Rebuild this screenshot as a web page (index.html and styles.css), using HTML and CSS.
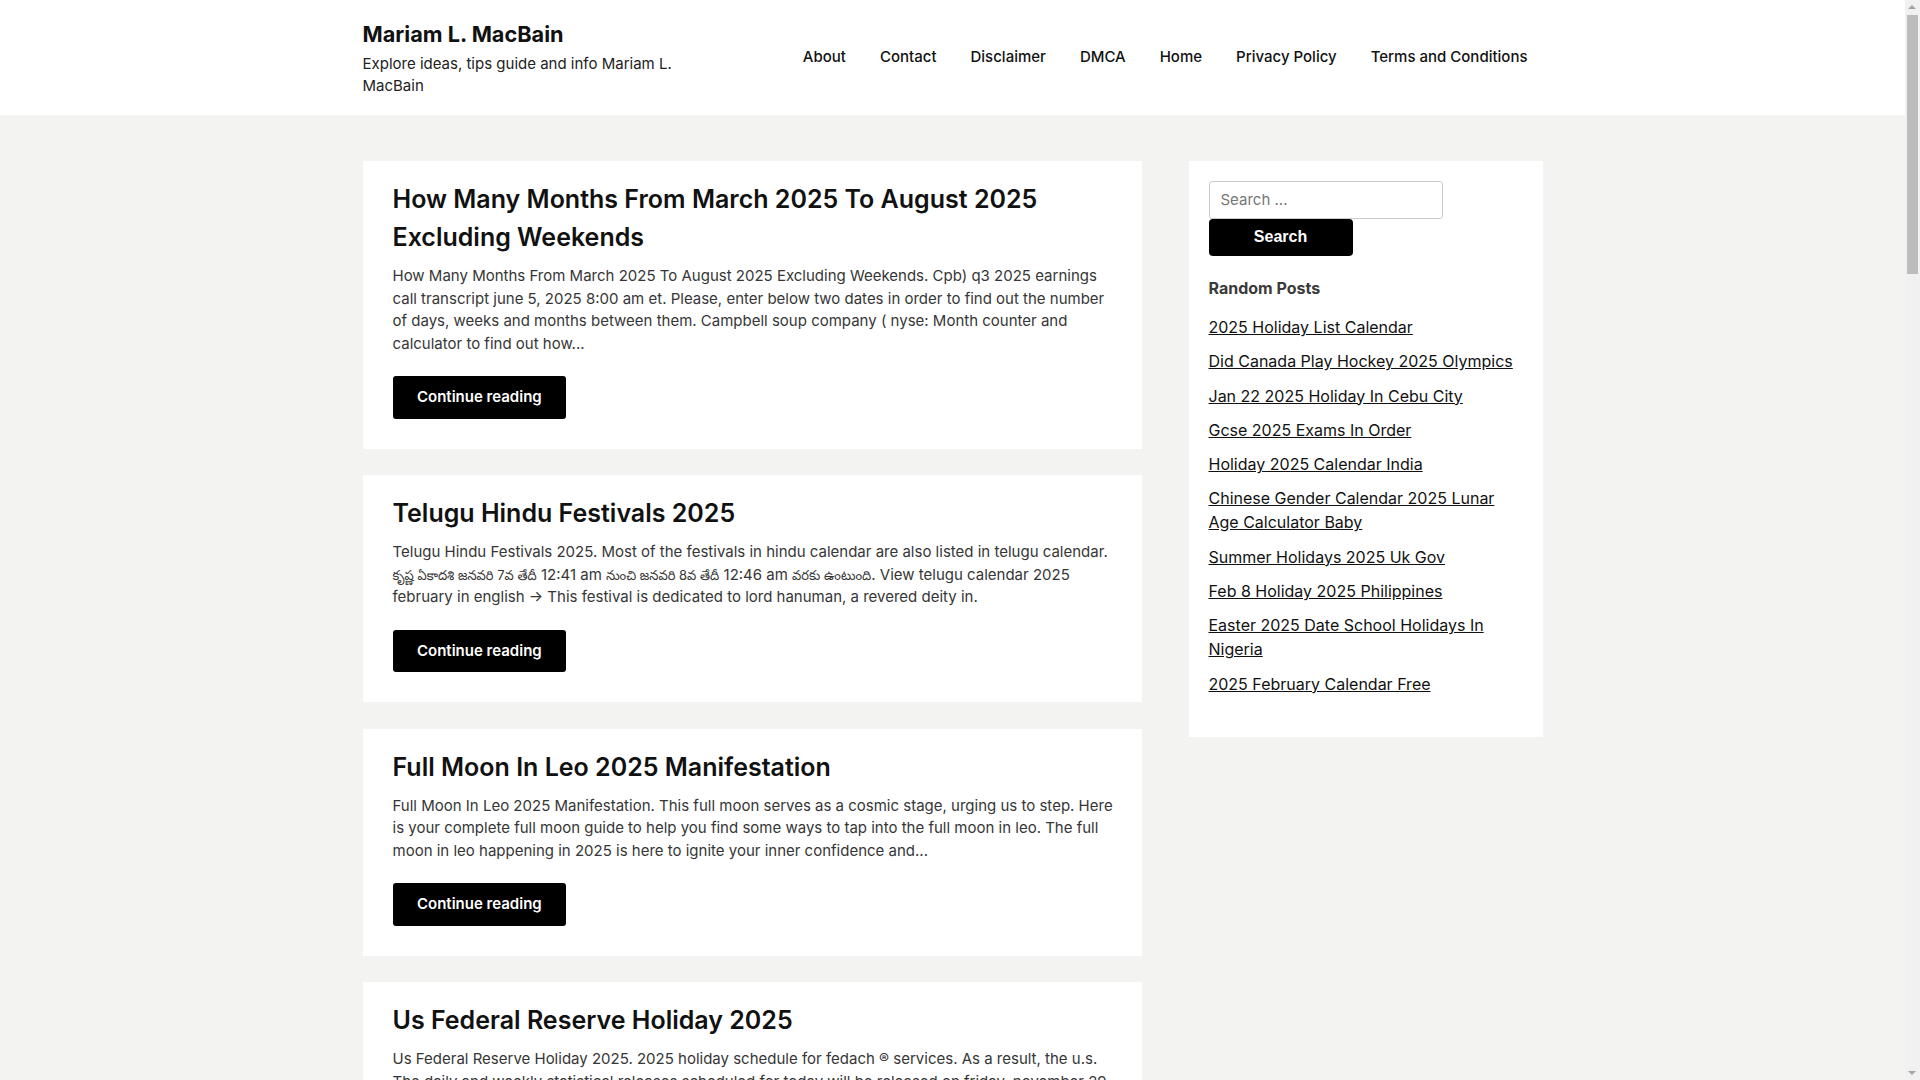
FILE: index.html
```html
<!DOCTYPE html>
<html lang="en">
<head>
<meta charset="utf-8">
<title>Mariam L. MacBain</title>
<link rel="stylesheet" href="styles.css">
</head>
<body class="page">
<header class="site-header">
  <div class="container header-inner">
    <div class="branding">
      <div class="site-title">Mariam L. MacBain</div>
      <p class="site-description">Explore ideas, tips guide and info Mariam L. MacBain</p>
    </div>
    <nav class="main-nav">
      <a href="#">About</a>
      <a href="#">Contact</a>
      <a href="#">Disclaimer</a>
      <a href="#">DMCA</a>
      <a href="#">Home</a>
      <a href="#">Privacy Policy</a>
      <a href="#">Terms and Conditions</a>
    </nav>
  </div>
</header>

<div class="container site-content">
  <main class="posts">
    <article class="post">
      <h2 class="post-title">How Many Months From March 2025 To August 2025 Excluding Weekends</h2>
      <p class="post-excerpt">How Many Months From March 2025 To August 2025 Excluding Weekends. Cpb) q3 2025 earnings call transcript june 5, 2025 8:00 am et. Please, enter below two dates in order to find out the number of days, weeks and months between them. Campbell soup company ( nyse: Month counter and calculator to find out how...</p>
      <a class="read-more" href="#">Continue reading</a>
    </article>
    <article class="post">
      <h2 class="post-title">Telugu Hindu Festivals 2025</h2>
      <p class="post-excerpt">Telugu Hindu Festivals 2025. Most of the festivals in hindu calendar are also listed in telugu calendar. <span class="telugu">కృష్ణ ఏకాదశి జనవరి 7వ తేదీ</span> 12:41 am <span class="telugu">నుంచి జనవరి 8వ తేదీ</span> 12:46 am <span class="telugu">వరకు ఉంటుంది</span>. View telugu calendar 2025 february in english → This festival is dedicated to lord hanuman, a revered deity in.</p>
      <a class="read-more" href="#">Continue reading</a>
    </article>
    <article class="post">
      <h2 class="post-title">Full Moon In Leo 2025 Manifestation</h2>
      <p class="post-excerpt">Full Moon In Leo 2025 Manifestation. This full moon serves as a cosmic stage, urging us to step. Here is your complete full moon guide to help you find some ways to tap into the full moon in leo. The full moon in leo happening in 2025 is here to ignite your inner confidence and...</p>
      <a class="read-more" href="#">Continue reading</a>
    </article>
    <article class="post">
      <h2 class="post-title">Us Federal Reserve Holiday 2025</h2>
      <p class="post-excerpt">Us Federal Reserve Holiday 2025. 2025 holiday schedule for fedach ® services. As a result, the u.s. The daily and weekly statistical releases scheduled for today will be released on friday, november 29, 2025 instead...</p>
      <a class="read-more" href="#">Continue reading</a>
    </article>
  </main>

  <aside class="sidebar">
    <form class="search-form">
      <input class="search-field" type="search" placeholder="Search ...">
      <button class="search-submit" type="button">Search</button>
    </form>
    <h3 class="widget-title">Random Posts</h3>
    <ul class="widget-list">
      <li><a href="#">2025 Holiday List Calendar</a></li>
      <li><a href="#">Did Canada Play Hockey 2025 Olympics</a></li>
      <li><a href="#">Jan 22 2025 Holiday In Cebu City</a></li>
      <li><a href="#">Gcse 2025 Exams In Order</a></li>
      <li><a href="#">Holiday 2025 Calendar India</a></li>
      <li><a href="#">Chinese Gender Calendar 2025 Lunar Age Calculator Baby</a></li>
      <li><a href="#">Summer Holidays 2025 Uk Gov</a></li>
      <li><a href="#">Feb 8 Holiday 2025 Philippines</a></li>
      <li><a href="#">Easter 2025 Date School Holidays In Nigeria</a></li>
      <li><a href="#">2025 February Calendar Free</a></li>
    </ul>
  </aside>
</div>

<div class="scrollbar" aria-hidden="true">
  <span class="sb-up"></span>
  <span class="sb-thumb"></span>
  <span class="sb-down"></span>
</div>
</body>
</html>
```

FILE: styles.css
```css
* {
  box-sizing: border-box;
}

html, body {
  margin: 0;
  padding: 0;
}

.page {
  background: #f3f4f2;
  color: #111;
  font-family: Inter, "Noto Sans", "Noto Sans Telugu", "DejaVu Sans", sans-serif;
  font-size: 15px;
  line-height: 1.5;
  padding-right: 15px;
}

a {
  color: inherit;
}

.container {
  width: 1180px;
  margin: 0 auto;
}

/* Header */
.site-header {
  background: #fff;
}

.header-inner {
  display: flex;
  align-items: center;
  justify-content: space-between;
  padding: 17px 0 17px;
  min-height: 115px;
}

.branding {
  width: 340px;
}

.site-title {
  font-size: 21.7px;
  font-weight: 700;
  line-height: 33px;
  color: #111;
  margin-bottom: 2px;
}

.site-description {
  margin: 0;
  font-size: 15px;
  line-height: 22.5px;
  color: #222;
}

.main-nav {
  display: flex;
  align-items: center;
}

.main-nav a {
  text-decoration: none;
  font-size: 15px;
  font-weight: 500;
  color: #111;
  padding: 0 17px;
}

.main-nav a:last-child {
  padding-right: 15px;
}

/* Content */
.site-content {
  display: grid;
  grid-template-columns: 779px 354px;
  column-gap: 47px;
  align-items: start;
  padding-top: 46px;
}

.post {
  background: #fff;
  padding: 19px 26px 30px 30px;
  margin-bottom: 26.5px;
}

.post-title {
  margin: 0 0 9px;
  font-size: 25px;
  line-height: 38px;
  font-weight: 600;
  color: #111;
}

.post-excerpt {
  margin: 0 0 21px;
  font-size: 15px;
  line-height: 22.5px;
  color: #363636;
}

.telugu {
  font-size: 13px;
}

.read-more {
  display: inline-block;
  background: #000;
  color: #fff;
  text-decoration: none;
  font-size: 15px;
  font-weight: 600;
  line-height: 22.5px;
  padding: 10px 24.5px;
  border-radius: 3px;
}

/* Sidebar */
.sidebar {
  background: #fff;
  padding: 20px 20px 20px;
}

.search-form {
  display: flex;
  flex-direction: column;
  align-items: flex-start;
}

.search-field {
  width: 234px;
  height: 37.5px;
  border: 1px solid #cccccc;
  border-radius: 3px;
  padding: 0 11px;
  font-family: Inter, sans-serif;
  font-size: 15px;
  color: #333;
  background: #fff;
}

.search-field::placeholder {
  color: #767676;
}

.search-submit {
  width: 144px;
  height: 37.5px;
  border: none;
  border-radius: 4px;
  background: #000;
  color: #fff;
  font-family: "Liberation Sans", Arial, sans-serif;
  font-weight: 700;
  font-size: 16px;
  padding: 0;
}

.widget-title {
  margin: 20px 0 15px;
  font-size: 16px;
  line-height: 24px;
  font-weight: 700;
  color: #3a3a3a;
}

.widget-list {
  list-style: none;
  margin: 0 0 21px;
  padding: 0;
}

.widget-list li {
  font-size: 16px;
  line-height: 24px;
  margin-bottom: 10.3px;
}

.widget-list li:last-child {
  margin-bottom: 0;
}

.widget-list a {
  color: #111;
  text-decoration: underline;
}

/* Simulated browser scrollbar (overlays the right edge of the viewport) */
.scrollbar {
  position: fixed;
  top: 0;
  right: 0;
  bottom: 0;
  width: 15px;
  background: #f1f1f1;
}

.sb-up,
.sb-down {
  position: absolute;
  left: 3px;
  width: 0;
  height: 0;
  border-left: 4.5px solid transparent;
  border-right: 4.5px solid transparent;
}

.sb-up {
  top: 5px;
  border-bottom: 4.5px solid #a3a3a3;
}

.sb-down {
  bottom: 5px;
  border-top: 4.5px solid #a3a3a3;
}

.sb-thumb {
  position: absolute;
  top: 15px;
  left: 2px;
  right: 2px;
  height: 259px;
  background: #bcbcbc;
}
```
